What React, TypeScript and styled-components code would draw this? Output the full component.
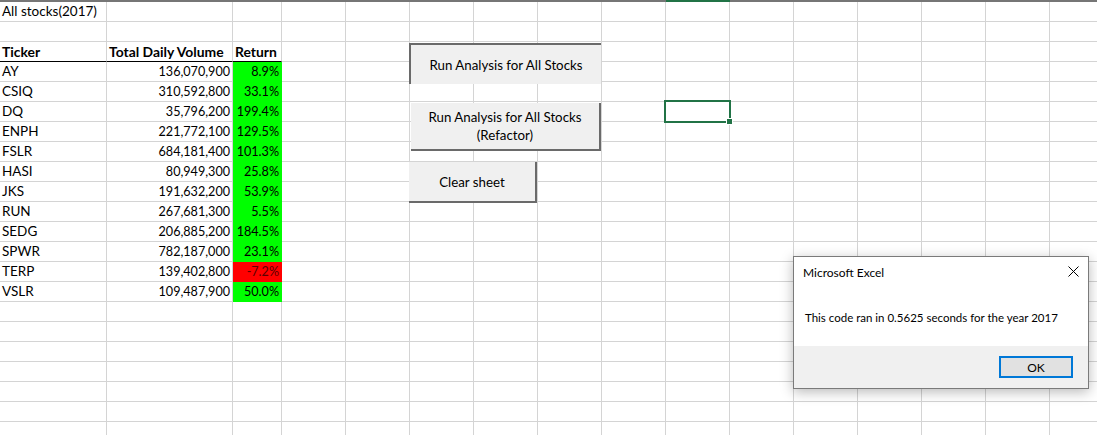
import React from "react";
import styled, {createGlobalStyle, css} from "styled-components";

const GlobalStyle = createGlobalStyle`
  html, body {
    margin: 0;
    padding: 0;
    background: #ffffff;
  }
  body {
    width: 1097px;
    height: 435px;
    overflow: hidden;
    font-family: Lato, "Open Sans", sans-serif;
  }
`;

const COLS = [107, 126, 49, ...Array(13).fill(64)];
const ROW_COUNT = 22;
const ACTIVE_COL = 9;
const GRID = "#d4d4d4";

interface Stock {
    ticker: string;
    volume: string;
    ret: string;
    loss?: boolean;
}

const stocks: Stock[] = [
    {ticker: "AY", volume: "136,070,900", ret: "8.9%"},
    {ticker: "CSIQ", volume: "310,592,800", ret: "33.1%"},
    {ticker: "DQ", volume: "35,796,200", ret: "199.4%"},
    {ticker: "ENPH", volume: "221,772,100", ret: "129.5%"},
    {ticker: "FSLR", volume: "684,181,400", ret: "101.3%"},
    {ticker: "HASI", volume: "80,949,300", ret: "25.8%"},
    {ticker: "JKS", volume: "191,632,200", ret: "53.9%"},
    {ticker: "RUN", volume: "267,681,300", ret: "5.5%"},
    {ticker: "SEDG", volume: "206,885,200", ret: "184.5%"},
    {ticker: "SPWR", volume: "782,187,000", ret: "23.1%"},
    {ticker: "TERP", volume: "139,402,800", ret: "-7.2%", loss: true},
    {ticker: "VSLR", volume: "109,487,900", ret: "50.0%"},
];

const Sheet = styled.div`
  position: relative;
  width: 1097px;
  height: 435px;
  overflow: hidden;
`;

const Grid = styled.div`
  display: grid;
  grid-template-columns: ${COLS.map((w) => w + "px").join(" ")};
  grid-template-rows: 2px repeat(${ROW_COUNT}, 20px);
`;

const EdgeStrip = styled.div<{ $active?: boolean }>`
  background: ${(p) => (p.$active ? "#217346" : "#767676")};
`;

const Cell = styled.div<{
    $align?: "left" | "right";
    $bold?: boolean;
    $numeric?: boolean;
    $fill?: string;
    $ink?: string;
    $rule?: boolean;
}>`
  box-sizing: border-box;
  padding: 0 2px;
  border-right: 1px solid ${(p) => p.$fill || GRID};
  border-bottom: 1px solid ${(p) => (p.$rule ? "#000000" : p.$fill || GRID)};
  background: ${(p) => p.$fill || "transparent"};
  color: ${(p) => p.$ink || "#000000"};
  font-size: ${(p) => (p.$numeric ? "12.6px" : p.$bold ? "13.9px" : "13.5px")};
  font-weight: ${(p) => (p.$bold ? 700 : 400)};
  line-height: 19px;
  text-align: ${(p) => p.$align || "left"};
  white-space: nowrap;
`;

const SheetButton = styled.div<{ $x: number; $y: number; $w: number; $h: number; $pressed?: boolean }>`
  position: absolute;
  left: ${(p) => p.$x}px;
  top: ${(p) => p.$y}px;
  width: ${(p) => p.$w}px;
  height: ${(p) => p.$h}px;
  box-sizing: border-box;
  display: flex;
  align-items: center;
  justify-content: center;
  text-align: center;
  background: #f0f0f0;
  color: #000000;
  font-size: 13.3px;
  line-height: 18px;
  ${(p) =>
    p.$pressed
        ? css`
            border-top: 2px solid #6a6a6a;
            border-left: 2px solid #6a6a6a;
          `
        : css`
            border-right: 2px solid #6a6a6a;
            border-bottom: 2px solid #6a6a6a;
          `}
`;

const Selection = styled.div`
  position: absolute;
  left: 664px;
  top: 100px;
  width: 67px;
  height: 23px;
  box-sizing: border-box;
  border: 2px solid #217346;
`;

const FillHandle = styled.div`
  position: absolute;
  right: -4px;
  bottom: -4px;
  width: 5px;
  height: 5px;
  background: #217346;
  border: 1px solid #ffffff;
`;

const Dialog = styled.div`
  position: absolute;
  left: 793px;
  top: 256px;
  width: 296px;
  height: 133px;
  box-sizing: border-box;
  display: flex;
  flex-direction: column;
  background: #ffffff;
  border: 1px solid #7a7a7a;
  box-shadow: 0 3px 12px rgba(0, 0, 0, 0.28);
  color: #000000;
`;

const TitleBar = styled.div`
  height: 31px;
  display: flex;
  align-items: center;
  justify-content: space-between;
  padding: 0 9px 0 9px;
  font-size: 12px;
`;

const CloseIcon = styled.svg`
  width: 11px;
  height: 11px;
  margin-top: -2px;
`;

const Message = styled.div`
  flex: 1;
  display: flex;
  align-items: center;
  padding: 0 11px;
  font-size: 11.5px;
`;

const Footer = styled.div`
  height: 42px;
  display: flex;
  align-items: center;
  justify-content: flex-end;
  padding-right: 15px;
  background: #f0f0f0;
`;

const OkButton = styled.button`
  width: 74px;
  height: 22px;
  box-sizing: border-box;
  padding: 0;
  border: 2px solid #0078d7;
  background: #e1e1e1;
  color: #000000;
  font-family: Lato, "Open Sans", sans-serif;
  font-size: 12px;
`;

const rowCells = (r: number) => {
    const blank = (c: number, extra?: React.ReactNode) => <Cell key={c}>{extra}</Cell>;
    const tail = COLS.slice(3).map((_, i) => blank(i + 3));

    if (r === 0) {
        return [blank(0, "All stocks(2017)"), blank(1), blank(2), ...tail];
    }
    if (r === 2) {
        return [
            <Cell key={0} $bold $rule>Ticker</Cell>,
            <Cell key={1} $bold $rule>Total Daily Volume</Cell>,
            <Cell key={2} $bold $rule>Return</Cell>,
            ...tail,
        ];
    }
    const stock = stocks[r - 3];
    if (stock) {
        return [
            <Cell key={0}>{stock.ticker}</Cell>,
            <Cell key={1} $align="right" $numeric>{stock.volume}</Cell>,
            <Cell
                key={2}
                $align="right"
                $numeric
                $fill={stock.loss ? "#ff0000" : "#00ff00"}
                $ink={stock.loss ? "#5c0000" : "#000000"}
            >
                {stock.ret}
            </Cell>,
            ...tail,
        ];
    }
    return COLS.map((_, i) => blank(i));
};

const App: React.FC = () => {
    return (
        <Sheet>
            <GlobalStyle />
            <Grid>
                {COLS.map((_, i) => (
                    <EdgeStrip key={"e" + i} $active={i === ACTIVE_COL} />
                ))}
                {Array.from({length: ROW_COUNT}, (_, r) => (
                    <React.Fragment key={r}>{rowCells(r)}</React.Fragment>
                ))}
            </Grid>

            <SheetButton $x={409} $y={43} $w={192} $h={41} $pressed>
                Run Analysis for All Stocks
            </SheetButton>
            <SheetButton $x={411} $y={103} $w={190} $h={48}>
                Run Analysis for All Stocks
                <br />
                (Refactor)
            </SheetButton>
            <SheetButton $x={409} $y={162} $w={128} $h={41}>
                Clear sheet
            </SheetButton>

            <Selection>
                <FillHandle />
            </Selection>

            <Dialog>
                <TitleBar>
                    <span>Microsoft Excel</span>
                    <CloseIcon viewBox="0 0 11 11">
                        <path d="M0.5 0.5 L10.5 10.5 M10.5 0.5 L0.5 10.5" stroke="#000000" strokeWidth="1" fill="none" />
                    </CloseIcon>
                </TitleBar>
                <Message>This code ran in 0.5625 seconds for the year 2017</Message>
                <Footer>
                    <OkButton>OK</OkButton>
                </Footer>
            </Dialog>
        </Sheet>
    );
};

export default App;
